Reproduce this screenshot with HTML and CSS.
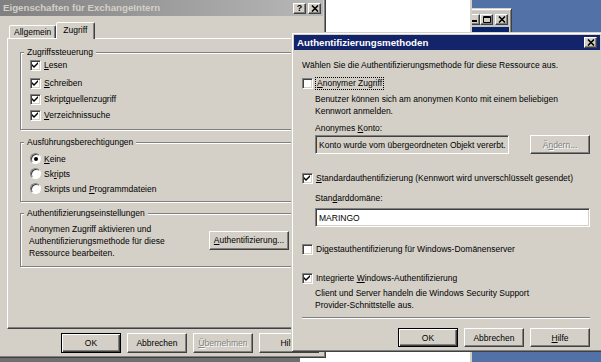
FILE: index.html
```html
<!DOCTYPE html>
<html>
<head>
  <link rel="stylesheet" href="styles.css">
</head>
<body>
  <div class="under"></div>

  <div class="mini-win">
    <div class="mini-title">
      <div class="cap"><svg width="6" height="6" viewBox="0 0 6 6"><rect x="0" y="4" width="6" height="2" fill="#000"/></svg></div>
      <div class="cap"><svg width="8" height="7" viewBox="0 0 8 7"><path d="M0.5 0.5h7v6h-7z M0.5 1.5h7" fill="none" stroke="#000"/></svg></div>
      <div class="cap cap-gap"><svg width="8" height="7" viewBox="0 0 8 7"><path d="M1 0.5l6 6M7 0.5l-6 6" stroke="#000" stroke-width="1.6"/></svg></div>
    </div>
    <div class="mini-body"></div>
  </div>

  <div class="back-win"></div>

  <!-- Eigenschaften dialog -->
  <div class="win props">
    <div class="titlebar inactive">
      <span class="title-text">Eigenschaften für ExchangeIntern</span>
      <div class="cap"><b class="q">?</b></div>
      <div class="cap cap-gap"><svg width="8" height="7" viewBox="0 0 8 7"><path d="M1 0.5l6 6M7 0.5l-6 6" stroke="#000" stroke-width="1.6"/></svg></div>
    </div>

    <div class="tabs">
      <div class="tab">Allgemein</div>
      <div class="tab selected">Zugriff</div>
    </div>

    <div class="panel">
      <fieldset class="group group-access">
        <legend>Zugriffssteuerung</legend>
        <div class="row first"><span class="cb"><svg width="7" height="7" viewBox="0 0 7 7"><polygon points="0,2 2,4 6,0 6,2 2,6 0,4" fill="#000"/></svg></span><span><u>L</u>esen</span></div>
        <div class="row"><span class="cb"><svg width="7" height="7" viewBox="0 0 7 7"><polygon points="0,2 2,4 6,0 6,2 2,6 0,4" fill="#000"/></svg></span><span><u>S</u>chreiben</span></div>
        <div class="row"><span class="cb"><svg width="7" height="7" viewBox="0 0 7 7"><polygon points="0,2 2,4 6,0 6,2 2,6 0,4" fill="#000"/></svg></span><span>Skript<u>q</u>uellenzugriff</span></div>
        <div class="row"><span class="cb"><svg width="7" height="7" viewBox="0 0 7 7"><polygon points="0,2 2,4 6,0 6,2 2,6 0,4" fill="#000"/></svg></span><span><u>V</u>erzeichnissuche</span></div>
      </fieldset>

      <fieldset class="group group-exec">
        <legend>Ausführungsberechtigungen</legend>
        <div class="row"><span class="radio checked"></span><span><u>K</u>eine</span></div>
        <div class="row"><span class="radio"></span><span>Sk<u>r</u>ipts</span></div>
        <div class="row"><span class="radio"></span><span>Skripts und <u>P</u>rogrammdateien</span></div>
      </fieldset>

      <fieldset class="group group-auth">
        <legend>Authentifizierungseinstellungen</legend>
        <div class="auth-row">
          <p class="auth-text">Anonymen Zugriff aktivieren und<br>Authentifizierungsmethode für diese<br>Ressource bearbeiten.</p>
          <div class="btn btn-wide"><span><u>A</u>uthentifizierung...</span></div>
        </div>
      </fieldset>
    </div>

    <div class="button-row">
      <div class="btn default">OK</div>
      <div class="btn">Abbrechen</div>
      <div class="btn disabled"><span><u>Ü</u>bernehmen</span></div>
      <div class="btn">Hilfe</div>
    </div>
  </div>

  <!-- Authentifizierungsmethoden dialog -->
  <div class="win auth">
    <div class="titlebar active">
      <span class="title-text">Authentifizierungsmethoden</span>
      <div class="cap"><svg width="8" height="7" viewBox="0 0 8 7"><path d="M1 0.5l6 6M7 0.5l-6 6" stroke="#000" stroke-width="1.6"/></svg></div>
    </div>

    <div class="auth-body">
      <p class="line intro">Wählen Sie die Authentifizierungsmethode für diese Ressource aus.</p>

      <div class="row opt-anon"><span class="cb"></span><span class="focus"><u>A</u>nonymer Zugriff</span></div>
      <p class="desc">Benutzer können sich am anonymen Konto mit einem beliebigen<br>Kennwort anmelden.</p>
      <p class="line sub label-konto">Anonymes <u>K</u>onto:</p>
      <div class="konto-row">
        <div class="field disabled-field">Konto wurde vom übergeordneten Objekt vererbt.</div>
        <div class="btn disabled"><span>Ä<u>n</u>dern...</span></div>
      </div>

      <div class="row opt-basic"><span class="cb"><svg width="7" height="7" viewBox="0 0 7 7"><polygon points="0,2 2,4 6,0 6,2 2,6 0,4" fill="#000"/></svg></span><span><u>S</u>tandardauthentifizierung (Kennwort wird unverschlüsselt gesendet)</span></div>
      <p class="line sub label-domain">Stan<u>d</u>arddomäne:</p>
      <div class="field domain-field">MARINGO</div>

      <div class="row opt-digest"><span class="cb"></span><span>Di<u>g</u>estauthentifizierung für Windows-Domänenserver</span></div>

      <div class="row opt-win"><span class="cb"><svg width="7" height="7" viewBox="0 0 7 7"><polygon points="0,2 2,4 6,0 6,2 2,6 0,4" fill="#000"/></svg></span><span>Integrierte <u>W</u>indows-Authentifizierung</span></div>
      <p class="desc desc-win">Client und Server handeln die Windows Security Support<br>Provider-Schnittstelle aus.</p>

      <div class="separator"></div>

      <div class="button-row auth-buttons">
        <div class="btn default">OK</div>
        <div class="btn">Abbrechen</div>
        <div class="btn"><span><u>H</u>ilfe</span></div>
      </div>
    </div>
  </div>
</body>
</html>
```

FILE: styles.css
```css
* {
  box-sizing: border-box;
}

body {
  position: relative;
  width: 601px;
  height: 362px;
  margin: 0;
  overflow: hidden;
  background: #5271a6;
  font-family: "Liberation Sans", Arial, sans-serif;
  font-size: 8.5px;
  line-height: 12px;
  color: #000;
}

p {
  margin: 0;
}

u {
  text-decoration-thickness: 1px;
  text-underline-offset: 1px;
}

/* windows lying on the desktop */
.under {
  position: absolute;
  left: 0;
  top: 340px;
  width: 330px;
  height: 30px;
  background: #6f6f6f;
}

.back-win {
  position: absolute;
  left: 300px;
  top: -5px;
  width: 172px;
  height: 380px;
  background: #fff;
  border-right: 2px solid #d4d0c8;
}

.mini-win {
  position: absolute;
  left: 430px;
  top: 8px;
  width: 82px;
  height: 60px;
  background: #d4d0c8;
  border: 1px solid;
  border-color: #d4d0c8 #404040 #404040 #d4d0c8;
  box-shadow: inset 1px 1px #fff, inset -1px -1px #808080;
  padding: 2px;
}

.mini-title {
  display: flex;
  justify-content: flex-end;
  align-items: center;
  height: 16px;
  padding-right: 1px;
  background: #c4c4c4;
}

.mini-body {
  height: 40px;
  background: #0a246a;
}

.win {
  position: absolute;
  display: flex;
  flex-direction: column;
  background: #d4d0c8;
  border: 1px solid;
  border-color: #d4d0c8 #404040 #404040 #d4d0c8;
  box-shadow: inset 1px 1px #fff, inset -1px -1px #808080;
  padding: 2px;
}

.titlebar {
  display: flex;
  align-items: center;
  flex-shrink: 0;
  font-size: 9.7px;
  font-weight: bold;
  padding: 0 2px 0 3px;
}

.titlebar.inactive {
  height: 16px;
  background: linear-gradient(to right, #808080, #b8b8b8);
  color: #d4d0c8;
}

.titlebar.active {
  height: 15px;
  background: #14246a;
  color: #fff;
  padding-right: 3px;
}

.title-text {
  flex: 1;
  white-space: nowrap;
}

.cap {
  display: flex;
  align-items: center;
  justify-content: center;
  width: 13px;
  height: 11px;
  background: #d4d0c8;
  border: 1px solid;
  border-color: #fff #404040 #404040 #fff;
  box-shadow: inset -1px -1px #808080;
}

.cap-gap {
  margin-left: 2px;
}

.q {
  font-size: 9px;
  line-height: 9px;
  color: #000;
}

/* Eigenschaften dialog */
.props {
  left: -3px;
  top: -3px;
  width: 329px;
  height: 361px;
}

.tabs {
  position: relative;
  z-index: 1;
  display: flex;
  align-items: flex-end;
  height: 16px;
  margin: 6px 0 0 9px;
}

.tab {
  display: flex;
  align-items: center;
  height: 13px;
  padding: 0 4px;
  border: 1px solid;
  border-bottom: none;
  border-color: #fff #404040 transparent #fff;
  border-radius: 2px 2px 0 0;
  box-shadow: inset -1px 0 #808080;
  background: #d4d0c8;
  white-space: nowrap;
}

.tab.selected {
  height: 17px;
  margin: 0 0 -1px 0;
  padding: 0 7px 2px 6px;
}

.panel {
  height: 291px;
  margin: 0 4px 0 7px;
  padding: 8px 13px 0 12px;
  border: 1px solid;
  border-color: #fff #404040 #404040 #fff;
  box-shadow: inset -1px -1px #808080;
}

.group {
  margin: 0;
  min-width: 0;
  padding: 0 15px 0 8px;
  border: 1px solid #808080;
  box-shadow: inset 1px 1px #fff, 1px 1px #fff;
}

.group legend {
  margin-left: -5px;
  padding: 0 3px;
  line-height: 10px;
  background: #d4d0c8;
}

.group-access {
  height: 83px;
  margin-bottom: 7px;
}

.group-exec {
  height: 65px;
  margin-bottom: 6px;
  padding-top: 4px;
}

.group-auth {
  height: 59px;
  padding-top: 5px;
}

.row {
  display: flex;
  align-items: center;
  gap: 3px;
  height: 16px;
  white-space: nowrap;
}

.group .row {
  padding-left: 1px;
}

.group-access .row.first {
  margin-bottom: 2px;
}

.group-exec .row {
  height: 15px;
}

.cb {
  display: flex;
  align-items: center;
  justify-content: center;
  flex-shrink: 0;
  width: 11px;
  height: 11px;
  background: #fff;
  border: 1px solid;
  border-color: #808080 #fff #fff #808080;
  box-shadow: inset 1px 1px #404040, inset -1px -1px #d4d0c8;
}

.radio {
  position: relative;
  flex-shrink: 0;
  width: 11px;
  height: 11px;
  border-radius: 50%;
  background: #fff;
  border: 1px solid;
  border-color: #808080 #fff #fff #808080;
  box-shadow: inset 1px 1px #404040;
}

.radio.checked::after {
  content: '';
  position: absolute;
  left: 3px;
  top: 3px;
  width: 4px;
  height: 4px;
  border-radius: 50%;
  background: #000;
}

.auth-row {
  display: flex;
  align-items: center;
  gap: 4px;
}

.auth-text {
  flex: 1;
  white-space: nowrap;
}

.btn {
  display: flex;
  align-items: center;
  justify-content: center;
  flex-shrink: 0;
  width: 60px;
  height: 20px;
  background: #d4d0c8;
  border: 1px solid;
  border-color: #fff #404040 #404040 #fff;
  box-shadow: inset -1px -1px #808080;
  white-space: nowrap;
}

.btn.default {
  border-color: #000;
  box-shadow: inset 1px 1px #fff, inset -1px -1px #404040, inset -2px -2px #808080;
}

.btn.disabled {
  color: #808080;
  text-shadow: 1px 1px #fff;
}

.btn-wide {
  width: 80px;
  height: 19px;
  margin-top: -2px;
}

.button-row {
  display: flex;
  justify-content: flex-end;
  gap: 6px;
  margin-top: 4px;
  padding-right: 4px;
}

/* Authentifizierungsmethoden dialog */
.auth {
  left: 291px;
  top: 32px;
  width: 312px;
  height: 320px;
}

.auth-body {
  display: flex;
  flex-direction: column;
  padding: 0 10px 0 8px;
}

.intro {
  margin-top: 9px;
}

.opt-anon {
  margin-top: 4px;
}

.focus {
  outline: 1px dotted #000;
  padding: 0 1px;
  line-height: 11px;
}

.desc {
  margin: 2px 0 0 13px;
}

.sub {
  margin-left: 13px;
}

.label-konto {
  margin-top: 5px;
}

.konto-row {
  display: flex;
  justify-content: space-between;
  margin: 1px 0 0 13px;
}

.field {
  display: flex;
  align-items: center;
  height: 19px;
  padding-left: 3px;
  background: #fff;
  border: 1px solid;
  border-color: #808080 #fff #fff #808080;
  box-shadow: inset 1px 1px #404040, inset -1px -1px #d4d0c8;
  white-space: nowrap;
}

.disabled-field {
  width: 194px;
  background: #d4d0c8;
}

.konto-row .btn {
  height: 19px;
}

.opt-basic {
  margin-top: 16px;
}

.label-domain {
  margin-top: 6px;
}

.domain-field {
  margin: 4px 0 0 13px;
}

.opt-digest {
  margin-top: 14px;
}

.opt-win {
  margin-top: 13px;
}

.desc-win {
  margin-top: 1px;
}

.separator {
  height: 2px;
  margin-top: 6px;
  border-top: 1px solid #808080;
  border-bottom: 1px solid #fff;
}

.auth-buttons {
  margin-top: 9px;
  padding-right: 0;
}

.auth-buttons .btn {
  height: 19px;
}
```
